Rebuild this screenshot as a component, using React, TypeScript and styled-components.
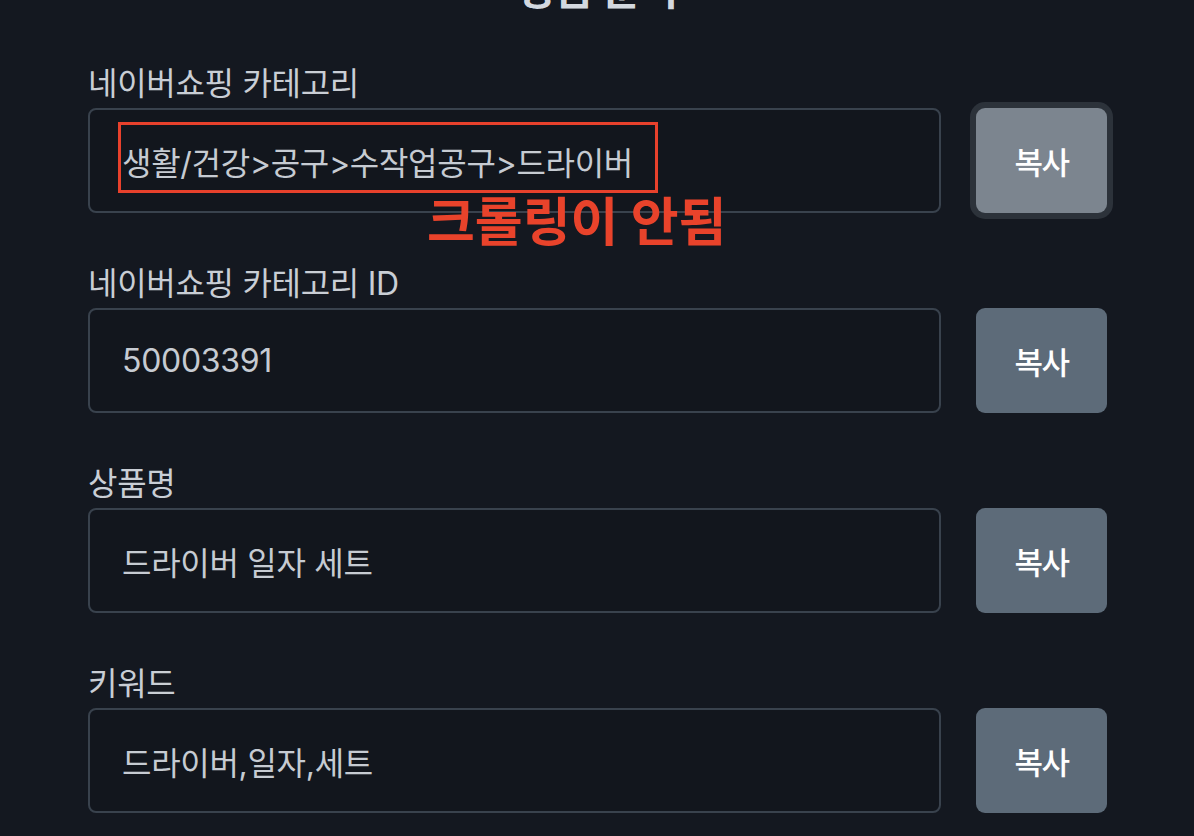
import React from "react"
import styled, { createGlobalStyle } from "styled-components"

// ■■■■■■■■■■■■■■■■■■■■■■■■■■■■■■■■■■■■■■■■■■■■■■■■■■■■■■■■■■■■■■■■■■■■■■■■■■■■■

type Field = {
	label: string
	value: string
	focused?: boolean
	annotated?: boolean
}

const fields: Field[] = [
	{ label: "네이버쇼핑 카테고리", value: "생활/건강>공구>수작업공구>드라이버", focused: true, annotated: true },
	{ label: "네이버쇼핑 카테고리 ID", value: "50003391" },
	{ label: "상품명", value: "드라이버 일자 세트" },
	{ label: "키워드", value: "드라이버,일자,세트" },
]

export default function App() {
	return (
		<>
			<GlobalStyle />
			<StyledPage>
				<StyledTitle>상품 분석</StyledTitle>
				<StyledForm>
					{fields.map((field) => (
						<StyledField key={field.label}>
							<StyledLabel>{field.label}</StyledLabel>
							<StyledRow>
								<StyledInputWrap>
									<StyledInput readOnly value={field.value} />
									{field.annotated && (
										<>
											<StyledMarkBox />
											<StyledMarkText>크롤링이 안됨</StyledMarkText>
										</>
									)}
								</StyledInputWrap>
								<StyledCopyButton $focused={field.focused}>복사</StyledCopyButton>
							</StyledRow>
						</StyledField>
					))}
				</StyledForm>
			</StyledPage>
		</>
	)
}

// 〓〓〓〓〓〓〓〓〓〓〓〓〓〓〓〓〓〓〓〓〓〓〓〓〓〓〓〓〓〓	STYLED_COMPONENTS

const GlobalStyle = createGlobalStyle`
	html, body {
		margin: 0;
		padding: 0;
		background: #141820;
		overflow: hidden;
	}
	body {
		font-family: "Inter", "Noto Sans CJK KR", sans-serif;
	}
`

const StyledPage = styled.div`
	width: 1194px;
	height: 836px;
	box-sizing: border-box;
	padding: 0 87px 0 88px;
	background: #141820;
	overflow: hidden;
`

const StyledTitle = styled.h1`
	margin: -34px 0 0;
	height: 48px;
	line-height: 48px;
	text-align: center;
	font-size: 42px;
	font-weight: 700;
	color: #d3d8df;
	letter-spacing: -1px;
`

const StyledForm = styled.div`
	display: flex;
	flex-direction: column;
	gap: 51px;
	margin-top: 50px;
`

const StyledField = styled.div`
	display: flex;
	flex-direction: column;
	gap: 4px;
`

const StyledLabel = styled.label`
	height: 40px;
	line-height: 40px;
	font-size: 32px;
	letter-spacing: -0.3px;
	color: #c9ced5;
`

const StyledRow = styled.div`
	display: grid;
	grid-template-columns: 1fr 131px;
	gap: 35px;
	height: 105px;
`

const StyledInputWrap = styled.div`
	position: relative;
`

const StyledInput = styled.input`
	width: 100%;
	height: 100%;
	box-sizing: border-box;
	padding: 0 32px;
	border: 2px solid #39424d;
	border-radius: 8px;
	background: #12161d;
	color: #c6cbd2;
	font-family: "Inter", "Noto Sans CJK KR", sans-serif;
	font-size: 32px;
	letter-spacing: -0.3px;
	outline: none;
`

const StyledMarkBox = styled.div`
	position: absolute;
	left: 30px;
	top: 14px;
	width: 540px;
	height: 71px;
	box-sizing: border-box;
	border: 3px solid #e8412c;
	pointer-events: none;
`

const StyledMarkText = styled.div`
	position: absolute;
	left: 339px;
	top: 84px;
	font-size: 52px;
	font-weight: 700;
	line-height: 62px;
	color: #e9432b;
	letter-spacing: 0;
	white-space: nowrap;
	pointer-events: none;
`

const StyledCopyButton = styled.button<{ $focused?: boolean }>`
	border: none;
	border-radius: 9px;
	background: ${(p) => (p.$focused ? "#7c858f" : "#5d6b79")};
	box-shadow: ${(p) => (p.$focused ? "0 0 0 6px #2c323a" : "none")};
	color: #ffffff;
	font-family: "Inter", "Noto Sans CJK KR", sans-serif;
	font-size: 31px;
	font-weight: 500;
	letter-spacing: -1.5px;
	cursor: pointer;
`
